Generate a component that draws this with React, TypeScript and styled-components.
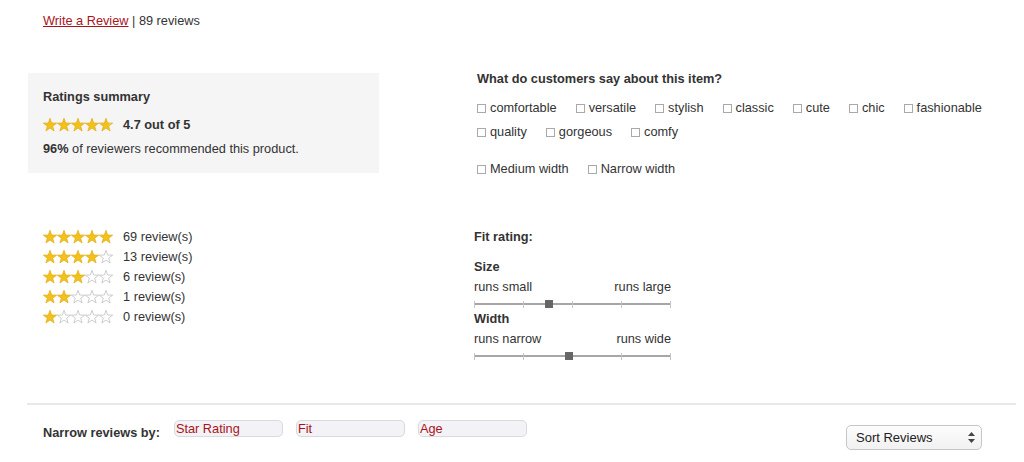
import { useId } from "react";
import styled, { createGlobalStyle } from "styled-components";

const GlobalStyle = createGlobalStyle`
    body {
        margin: 0;
        background: #fff;
        font-family: "Liberation Sans", Arial, Helvetica, sans-serif;
        font-size: 12.75px;
        color: #333;
    }
`;

const RED = "#a8141b";

const Page = styled.div`
    width: 989px;
    margin-left: 27px;
    padding-top: 13px;
`;

const Header = styled.div`
    padding-left: 16px;
    line-height: 16px;
`;

const ReviewLink = styled.a`
    color: ${RED};
    text-decoration: underline;
    cursor: pointer;
`;

const TopSection = styled.div`
    display: grid;
    grid-template-columns: 450px 539px;
    margin-top: 41px;
`;

const SummaryBox = styled.div`
    margin: 3px 0 0 1px;
    width: 351px;
    height: 100px;
    box-sizing: border-box;
    padding: 16px 15px;
    background: #f5f5f5;
`;

const BoxTitle = styled.div`
    font-weight: bold;
    line-height: 16px;
`;

const StarLine = styled.div<{ $top?: number }>`
    display: flex;
    align-items: center;
    gap: 10px;
    line-height: ${(p) => (p.$top !== undefined ? 16 : 20)}px;
    margin-top: ${(p) => p.$top ?? 0}px;
`;

const Bold = styled.b`
    font-weight: bold;
`;

const Recommend = styled.div`
    margin-top: 8px;
    line-height: 16px;
`;

const Stars = styled.span`
    display: inline-flex;
    width: 70px;
`;

const Question = styled.div`
    padding-top: 1px;
`;

const QuestionTitle = styled.div`
    font-weight: bold;
    line-height: 16px;
`;

const TagList = styled.div<{ $top: number }>`
    display: flex;
    flex-wrap: wrap;
    column-gap: 19px;
    row-gap: 8px;
    margin-top: ${(p) => p.$top}px;
`;

const Tag = styled.label`
    display: inline-flex;
    align-items: center;
    gap: 4px;
    line-height: 16px;
    cursor: pointer;
`;

const Box = styled.input`
    appearance: none;
    width: 9px;
    height: 9px;
    margin: 0;
    border: 1px solid #a9a9a9;
    background: #fff;
    box-sizing: border-box;
`;

const MiddleSection = styled.div`
    display: grid;
    grid-template-columns: 447px 200px;
    margin-top: 50px;
`;

const Distribution = styled.div`
    padding-left: 16px;
`;

const Fit = styled.div`
    padding-top: 2px;
`;

const FitTitle = styled.div<{ $top?: number }>`
    font-weight: bold;
    line-height: 16px;
    margin-top: ${(p) => p.$top ?? 0}px;
`;

const Ends = styled.div`
    display: flex;
    justify-content: space-between;
    width: 197px;
    line-height: 16px;
    margin-top: 4px;
`;

const Track = styled.div`
    position: relative;
    width: 197px;
    height: 10px;
    margin-top: 4px;
    display: flex;
    justify-content: space-between;
    align-items: center;
    &::before {
        content: "";
        position: absolute;
        left: 0;
        right: 0;
        top: 4px;
        height: 2px;
        background: #a6a6a6;
    }
`;

const Tick = styled.span`
    width: 1px;
    height: 7px;
    background: #c4c4c4;
    position: relative;
`;

const Thumb = styled.span`
    position: absolute;
    top: 1px;
    width: 8px;
    height: 8px;
    margin-left: -4px;
    background: #666;
`;

const Rule = styled.div`
    margin-top: 42px;
    border-top: 2px solid #e8e8e8;
`;

const Footer = styled.div`
    display: flex;
    align-items: flex-start;
    padding-left: 16px;
    padding-right: 34px;
`;

const FilterLabel = styled.div`
    font-weight: bold;
    line-height: 16px;
    margin-top: 20px;
    margin-right: 14px;
`;

const Filters = styled.div`
    display: flex;
    gap: 13px;
    margin-top: 15px;
`;

const Filter = styled.button`
    width: 109px;
    height: 17px;
    padding: 0 0 0 1px;
    text-align: left;
    font: inherit;
    line-height: 15px;
    color: ${RED};
    background: #f3f2f6;
    border: 1px solid #d9d9de;
    border-radius: 5px;
`;

const Sort = styled.button`
    margin-left: auto;
    margin-top: 20px;
    width: 136px;
    height: 25px;
    padding: 0 6px 0 9px;
    display: flex;
    align-items: center;
    justify-content: space-between;
    font: inherit;
    font-size: 13px;
    color: #222;
    background: linear-gradient(#fdfdfd, #f1f1f1);
    border: 1px solid #c6c6c6;
    border-radius: 5px;
`;

const STAR = "M7 0.3 L8.65 5.03 L13.66 5.14 L9.66 8.17 L11.11 12.96 L7 10.1 L2.89 12.96 L4.34 8.17 L0.34 5.14 L5.35 5.03 Z";

const Star = ({ fill }: { fill: number }) => {
	const id = useId();
	return <svg width="14" height="14" viewBox="0 0 14 14">
		<defs>
			<linearGradient id={id}>
				<stop offset={fill} stopColor="#f3c11b" />
				<stop offset={fill} stopColor={fill > 0 && fill < 1 ? "#f6d56a" : "#fff"} />
			</linearGradient>
		</defs>
		<path d={STAR} fill={`url(#${id})`} stroke={fill > 0 ? "#e2ab0c" : "#b9b9b9"} strokeWidth="0.7" strokeLinejoin="round" />
	</svg>;
};

const StarRow = ({ value }: { value: number }) => <Stars>
	{[0, 1, 2, 3, 4].map((i) => <Star key={i} fill={Math.max(0, Math.min(1, value - i))} />)}
</Stars>;

const Slider = ({ pos }: { pos: number }) => <Track>
	{[0, 1, 2, 3, 4].map((i) => <Tick key={i} />)}
	<Thumb style={{ left: `${pos * 100}%` }} />
</Track>;

const tags = ["comfortable", "versatile", "stylish", "classic", "cute", "chic", "fashionable", "quality", "gorgeous", "comfy"];
const widthTags = ["Medium width", "Narrow width"];
const distribution = [
	{ stars: 5, count: 69 },
	{ stars: 4, count: 13 },
	{ stars: 3, count: 6 },
	{ stars: 2, count: 1 },
	{ stars: 1, count: 0 },
];

export default function App() {
	return <Page>
		<GlobalStyle />
		<Header><ReviewLink>Write a Review</ReviewLink> | 89 reviews</Header>

		<TopSection>
			<SummaryBox>
				<BoxTitle>Ratings summary</BoxTitle>
				<StarLine $top={12}><StarRow value={4.7} /><Bold>4.7 out of 5</Bold></StarLine>
				<Recommend><Bold>96%</Bold> of reviewers recommended this product.</Recommend>
			</SummaryBox>
			<Question>
				<QuestionTitle>What do customers say about this item?</QuestionTitle>
				<TagList $top={13}>
					{tags.map((t) => <Tag key={t}><Box type="checkbox" />{t}</Tag>)}
				</TagList>
				<TagList $top={21}>
					{widthTags.map((t) => <Tag key={t}><Box type="checkbox" />{t}</Tag>)}
				</TagList>
			</Question>
		</TopSection>

		<MiddleSection>
			<Distribution>
				{distribution.map((d) => <StarLine key={d.stars}><StarRow value={d.stars} />{d.count} review(s)</StarLine>)}
			</Distribution>
			<Fit>
				<FitTitle>Fit rating:</FitTitle>
				<FitTitle $top={14}>Size</FitTitle>
				<Ends><span>runs small</span><span>runs large</span></Ends>
				<Slider pos={0.38} />
				<FitTitle $top={2}>Width</FitTitle>
				<Ends><span>runs narrow</span><span>runs wide</span></Ends>
				<Slider pos={0.48} />
			</Fit>
		</MiddleSection>

		<Rule />

		<Footer>
			<FilterLabel>Narrow reviews by:</FilterLabel>
			<Filters>
				<Filter>Star Rating</Filter>
				<Filter>Fit</Filter>
				<Filter>Age</Filter>
			</Filters>
			<Sort>
				Sort Reviews
				<svg width="7" height="11" viewBox="0 0 7 11"><path d="M3.5 0 L7 4 L0 4 Z M0 7 L7 7 L3.5 11 Z" fill="#444" /></svg>
			</Sort>
		</Footer>
	</Page>;
}
